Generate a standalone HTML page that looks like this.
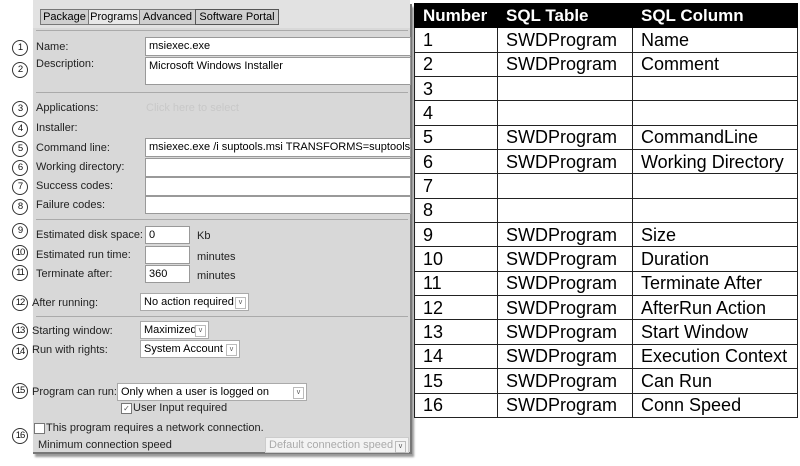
<!DOCTYPE html>
<html><head><meta charset="utf-8"><style>
body{margin:0;width:800px;height:466px;background:#fff;position:relative;overflow:hidden;font-family:"Liberation Sans",sans-serif;}
.a{position:absolute;}
.l{position:absolute;font-size:11px;color:#222;white-space:nowrap;}
.c{position:absolute;width:14px;height:14px;border:1px solid #333;border-radius:50%;font-size:9.5px;text-align:center;line-height:14px;color:#111;background:#fff;left:12px;letter-spacing:-1px;}
.in{position:absolute;background:#fff;border:1px solid #999;font-size:11px;line-height:17px;padding-left:3px;box-sizing:border-box;white-space:nowrap;overflow:hidden;}
.sel{position:absolute;background:#fff;border:1px solid #aaa;font-size:11px;line-height:16px;padding-left:3px;box-sizing:border-box;white-space:nowrap;}
.sel b{position:absolute;right:2px;top:3px;width:9px;height:10px;border:1px solid #bbb;font-size:7px;line-height:10px;text-align:center;color:#555;font-weight:normal;}
.hr{position:absolute;height:1px;background:#aaa;left:36px;width:372px;}
.tab{position:absolute;top:9px;height:16px;border:1px solid #777;background:#cfcfcf;font-size:11px;line-height:15px;text-align:center;box-sizing:border-box;}
table{position:absolute;left:414px;top:3px;border-collapse:collapse;font-family:"Liberation Sans",sans-serif;font-size:18px;}
tr{height:24.35px;}
td{border:1px solid #222;padding:0 0 0 8px;box-sizing:border-box;line-height:22px;color:#000;}
tr.h td{background:#000;color:#fff;font-weight:bold;border-color:#000;font-size:17px;}
</style></head><body>
<div class="a" style="left:33px;top:4px;width:377px;height:448px;background:#d8d8d8;border-right:2px solid #777;border-bottom:2px solid #777;box-shadow:2px 3px 2px #999;"></div>
<div class="a" style="left:33px;top:0;width:377px;height:28px;background:#e2e2e2;"></div>
<div class="tab" style="left:40px;width:49px;">Package</div>
<div class="tab" style="left:88px;width:52px;background:#e8e8e8;">Programs</div>
<div class="tab" style="left:139px;width:57px;">Advanced</div>
<div class="tab" style="left:195px;width:84px;border-color:#555;">Software Portal</div>
<div class="hr" style="top:30px"></div>
<div class="hr" style="top:92px"></div>
<div class="hr" style="top:219px"></div>
<div class="hr" style="top:316px"></div>
<div class="c" style="top:40px">1</div><div class="c" style="top:62px">2</div>
<div class="c" style="top:101px">3</div><div class="c" style="top:121px">4</div>
<div class="c" style="top:141px">5</div><div class="c" style="top:160px">6</div>
<div class="c" style="top:179px">7</div><div class="c" style="top:199px">8</div>
<div class="c" style="top:223px">9</div><div class="c" style="top:245px">10</div>
<div class="c" style="top:265px">11</div><div class="c" style="top:295px">12</div>
<div class="c" style="top:323px">13</div><div class="c" style="top:344px">14</div>
<div class="c" style="top:383px">15</div><div class="c" style="top:428px">16</div>
<div class="l" style="left:36px;top:41px">Name:</div>
<div class="l" style="left:36px;top:58px">Description:</div>
<div class="l" style="left:36px;top:102px">Applications:</div>
<div class="l" style="left:146px;top:102px;color:#c8c8c8">Click here to select</div>
<div class="l" style="left:36px;top:122px">Installer:</div>
<div class="l" style="left:36px;top:142px">Command line:</div>
<div class="l" style="left:36px;top:161px">Working directory:</div>
<div class="l" style="left:36px;top:180px">Success codes:</div>
<div class="l" style="left:36px;top:199px">Failure codes:</div>
<div class="in" style="left:145px;top:37px;width:266px;height:19px">msiexec.exe</div>
<div class="in" style="left:145px;top:57px;width:266px;height:28px">Microsoft Windows Installer</div>
<div class="in" style="left:145px;top:138px;width:266px;height:19px">msiexec.exe /i suptools.msi TRANSFORMS=suptools.msi</div>
<div class="in" style="left:145px;top:158px;width:266px;height:19px"></div>
<div class="in" style="left:145px;top:177px;width:266px;height:19px"></div>
<div class="in" style="left:145px;top:196px;width:266px;height:18px"></div>
<div class="l" style="left:36px;top:229px">Estimated disk space:</div>
<div class="l" style="left:36px;top:249px">Estimated run time:</div>
<div class="l" style="left:36px;top:268px">Terminate after:</div>
<div class="in" style="left:145px;top:226px;width:45px;height:18px">0</div>
<div class="in" style="left:145px;top:246px;width:45px;height:18px"></div>
<div class="in" style="left:145px;top:265px;width:45px;height:18px">360</div>
<div class="l" style="left:197px;top:230px">Kb</div>
<div class="l" style="left:197px;top:251px">minutes</div>
<div class="l" style="left:197px;top:270px">minutes</div>
<div class="l" style="left:32px;top:297px">After running:</div>
<div class="sel" style="left:140px;top:293px;width:109px;height:18px">No action required<b>v</b></div>
<div class="l" style="left:32px;top:325px">Starting window:</div>
<div class="sel" style="left:140px;top:321px;width:69px;height:18px">Maximized<b>v</b></div>
<div class="l" style="left:32px;top:344px">Run with rights:</div>
<div class="sel" style="left:140px;top:340px;width:100px;height:18px">System Account<b>v</b></div>
<div class="l" style="left:32px;top:386px">Program can run:</div>
<div class="sel" style="left:117px;top:383px;width:190px;height:18px">Only when a user is logged on<b>v</b></div>
<div class="a" style="left:121px;top:403px;width:9px;height:9px;border:1px solid #777;background:#fff;font-size:8px;line-height:9px;text-align:center;color:#555">✓</div>
<div class="l" style="left:133px;top:402px">User Input required</div>
<div class="a" style="left:34px;top:423px;width:9px;height:9px;border:1px solid #777;background:#fff"></div>
<div class="l" style="left:46px;top:422px">This program requires a network connection.</div>
<div class="l" style="left:38px;top:439px">Minimum connection speed</div>
<div class="sel" style="left:265px;top:437px;width:144px;height:16px;line-height:14px;color:#aaa;background:#f3f3f3;border-color:#ccc">Default connection speed<b>v</b></div>
<table>
<colgroup><col style="width:83px"><col style="width:135px"><col style="width:165px"></colgroup>
<tr class="h"><td>Number</td><td>SQL Table</td><td>SQL Column</td></tr>
<tr><td>1</td><td>SWDProgram</td><td>Name</td></tr>
<tr><td>2</td><td>SWDProgram</td><td>Comment</td></tr>
<tr><td>3</td><td></td><td></td></tr>
<tr><td>4</td><td></td><td></td></tr>
<tr><td>5</td><td>SWDProgram</td><td>CommandLine</td></tr>
<tr><td>6</td><td>SWDProgram</td><td>Working Directory</td></tr>
<tr><td>7</td><td></td><td></td></tr>
<tr><td>8</td><td></td><td></td></tr>
<tr><td>9</td><td>SWDProgram</td><td>Size</td></tr>
<tr><td>10</td><td>SWDProgram</td><td>Duration</td></tr>
<tr><td>11</td><td>SWDProgram</td><td>Terminate After</td></tr>
<tr><td>12</td><td>SWDProgram</td><td>AfterRun Action</td></tr>
<tr><td>13</td><td>SWDProgram</td><td>Start Window</td></tr>
<tr><td>14</td><td>SWDProgram</td><td>Execution Context</td></tr>
<tr><td>15</td><td>SWDProgram</td><td>Can Run</td></tr>
<tr><td>16</td><td>SWDProgram</td><td>Conn Speed</td></tr>
</table>
</body></html>
